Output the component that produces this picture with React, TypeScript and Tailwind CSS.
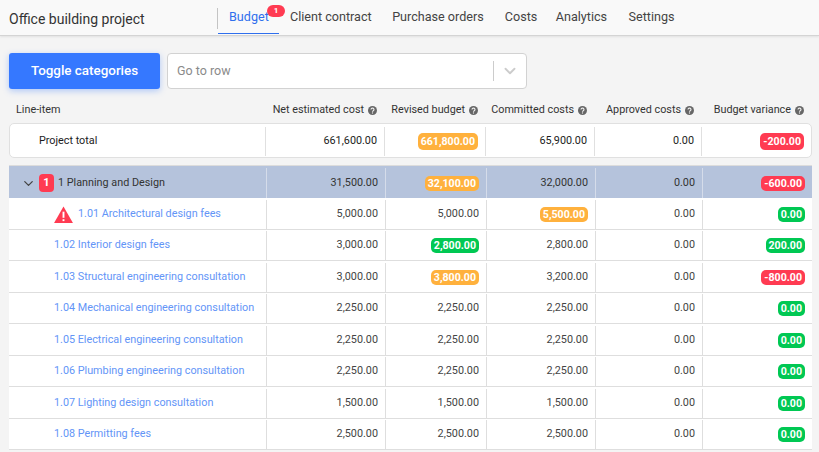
import React from 'react';
import { ChevronDown } from 'lucide-react';

type Tone = 'orange' | 'green' | 'red';

type Cell = string | { v: string; tone: Tone };

const grid = 'grid grid-cols-[257px_119px_101px_109px_107px_110px]';
const gridTotal = 'grid grid-cols-[255px_119px_101px_109px_107px_110px]';

const badgeTone: Record<Tone, string> = {
  orange: 'bg-[#ffb13d]',
  green: 'bg-[#00c853]',
  red: 'bg-[#ff3b52]',
};

const rows: { name: string; cells: Cell[]; warn?: boolean }[] = [
  { name: '1.01 Architectural design fees', warn: true, cells: ['5,000.00', '5,000.00', { v: '5,500.00', tone: 'orange' }, '0.00', { v: '0.00', tone: 'green' }] },
  { name: '1.02 Interior design fees', cells: ['3,000.00', { v: '2,800.00', tone: 'green' }, '2,800.00', '0.00', { v: '200.00', tone: 'green' }] },
  { name: '1.03 Structural engineering consultation', cells: ['3,000.00', { v: '3,800.00', tone: 'orange' }, '3,200.00', '0.00', { v: '-800.00', tone: 'red' }] },
  { name: '1.04 Mechanical engineering consultation', cells: ['2,250.00', '2,250.00', '2,250.00', '0.00', { v: '0.00', tone: 'green' }] },
  { name: '1.05 Electrical engineering consultation', cells: ['2,250.00', '2,250.00', '2,250.00', '0.00', { v: '0.00', tone: 'green' }] },
  { name: '1.06 Plumbing engineering consultation', cells: ['2,250.00', '2,250.00', '2,250.00', '0.00', { v: '0.00', tone: 'green' }] },
  { name: '1.07 Lighting design consultation', cells: ['1,500.00', '1,500.00', '1,500.00', '0.00', { v: '0.00', tone: 'green' }] },
  { name: '1.08 Permitting fees', cells: ['2,500.00', '2,500.00', '2,500.00', '0.00', { v: '0.00', tone: 'green' }] },
];

const Help = () => (
  <svg viewBox="0 0 16 16" className="ml-[4px] h-[9px] w-[9px] shrink-0">
    <circle cx="8" cy="8" r="8" fill="#666" />
    <path d="M5.4 6.2a2.6 2.4 0 1 1 3.9 2.1c-.9.5-1.3.9-1.3 1.7" fill="none" stroke="#f3f3f3" strokeWidth="2" />
    <rect x="7" y="11.4" width="2" height="2" fill="#f3f3f3" />
  </svg>
);

const Value = ({ cell, divider, tall }: { cell: Cell; divider: string; tall?: boolean }) => (
  <div className={`flex items-center justify-end border-l pr-[7px] ${divider}`}>
    {typeof cell === 'string' ? (
      <span>{cell}</span>
    ) : (
      <span className={`rounded-[5px] px-[3px] text-[10.6px] font-bold text-white ${tall ? 'leading-[17px]' : 'leading-[15px]'} ${badgeTone[cell.tone]}`}>{cell.v}</span>
    )}
  </div>
);

const tabs = ['Client contract', 'Purchase orders', 'Costs', 'Analytics', 'Settings'];
const tabGaps = ['ml-[11px]', 'ml-[20.5px]', 'ml-[21px]', 'ml-[18.5px]', 'ml-[21.5px]'];

const heads = [
  { label: 'Net estimated cost', w: 'w-[119px]' },
  { label: 'Revised budget', w: 'w-[101px]' },
  { label: 'Committed costs', w: 'w-[109px]' },
  { label: 'Approved costs', w: 'w-[107px]' },
  { label: 'Budget variance', w: 'w-[110px]' },
];

export default function App() {
  return (
    <div className="h-[452px] w-[819px] overflow-hidden bg-[#f4f4f4] font-['Roboto',sans-serif] text-[10.8px] text-[#444]">
      {/* top bar */}
      <div className="flex h-[36px] items-start border-b border-[#d4d4d4] bg-[#f9f9f9] shadow-[0_1px_2px_rgba(0,0,0,0.08)]">
        <div className="ml-[9px] w-[208px] pt-[10px] text-[14px] leading-[18px] text-[#333]">Office building project</div>
        <div className="mt-[8px] h-[21px] w-px bg-[#c4c4c4]" />
        <div className="relative h-[34px] w-[61px] border-b border-[#2f6fed] pt-[8px] pl-[11px] text-[12.6px] leading-[17px] text-[#2f6fed]">
          Budget
          <span className="absolute top-[5px] left-[49px] flex h-[12px] w-[18px] items-center justify-center rounded-full bg-[#ff3b52] text-[8px] leading-none font-bold text-white">1</span>
        </div>
        {tabs.map((t, i) => (
          <div key={t} className={`pt-[8px] text-[12.6px] leading-[17px] text-[#444] ${tabGaps[i]}`}>{t}</div>
        ))}
      </div>

      {/* toolbar */}
      <div className="mt-[17px] ml-[9px] flex h-[36px] items-center">
        <button className="h-[36px] w-[151px] rounded-[3px] bg-[#3578ff] text-[13.4px] font-medium text-white shadow-[0_2px_6px_rgba(53,120,255,0.35)]">Toggle categories</button>
        <div className="ml-[7px] flex h-[36px] w-[360px] items-center rounded-[4px] border border-[#d2d2d2] bg-white pl-[9px] text-[12.5px] text-[#8a8a8a]">
          <span className="flex-1">Go to row</span>
          <div className="h-[20px] w-px bg-[#ccc]" />
          <ChevronDown className="mx-[6px] h-[18px] w-[20px] text-[#ccc]" strokeWidth={2.5} />
        </div>
      </div>

      {/* column headings */}
      <div className="mt-[14px] ml-[9px] flex h-[14px] items-center leading-[14px] text-[#333]">
        <div className="w-[257px] pl-[7px]">Line-item</div>
        {heads.map((h) => (
          <div key={h.label} className={`flex items-center justify-end pr-[8px] ${h.w}`}>
            {h.label}
            <Help />
          </div>
        ))}
      </div>

      {/* project total */}
      <div className={`mt-[6px] ml-[9px] h-[35px] w-[803px] rounded-[5px] border border-[#e0e0e0] bg-white pt-[3px] pb-[1px] text-[#1c1c1c] ${gridTotal}`}>
        <div className="flex items-center pl-[29px]">Project total</div>
        {['661,600.00', { v: '661,800.00', tone: 'orange' as Tone }, '65,900.00', '0.00', { v: '-200.00', tone: 'red' as Tone }].map((c, i) => (
          <Value key={i} cell={c} divider="border-[#e0e0e0]" tall />
        ))}
      </div>

      {/* category table */}
      <div className="mt-[7px] ml-[9px] w-[803px] border-t border-[#dcdcdc] bg-white">
        <div className={`h-[32px] bg-[#b5c3dc] pt-[2px] text-[#333] ${grid}`}>
          <div className="flex items-center pl-[12px]">
            <ChevronDown className="h-[15px] w-[15px] text-[#444]" strokeWidth={2} />
            <span className="ml-[3px] flex h-[18px] w-[15px] items-center justify-center rounded-[4px] bg-[#ff3b52] text-[11px] font-bold text-white">1</span>
            <span className="ml-[4px]">1 Planning and Design</span>
          </div>
          {['31,500.00', { v: '32,100.00', tone: 'orange' as Tone }, '32,000.00', '0.00', { v: '-600.00', tone: 'red' as Tone }].map((c, i) => (
            <Value key={i} cell={c} divider="border-[#d5dcea]" />
          ))}
        </div>
        {rows.map((r) => (
          <div key={r.name} className={`h-[31.5px] border-b border-[#dedede] pt-[1.5px] ${grid}`}>
            <div className="flex items-center pl-[45px] text-[#6395f7]">
              {r.warn && (
                <svg viewBox="0 0 20 18" className="mr-[5px] h-[17px] w-[19px] shrink-0">
                  <path d="M10 0.5 L20 18 L0 18 Z" fill="#ff3b52" />
                  <rect x="9" y="6" width="2" height="6.5" fill="#fff" />
                  <rect x="9" y="14" width="2" height="2" fill="#fff" />
                </svg>
              )}
              {r.name}
            </div>
            {r.cells.map((c, i) => (
              <Value key={i} cell={c} divider="border-[#dedede]" />
            ))}
          </div>
        ))}
      </div>
    </div>
  );
}
